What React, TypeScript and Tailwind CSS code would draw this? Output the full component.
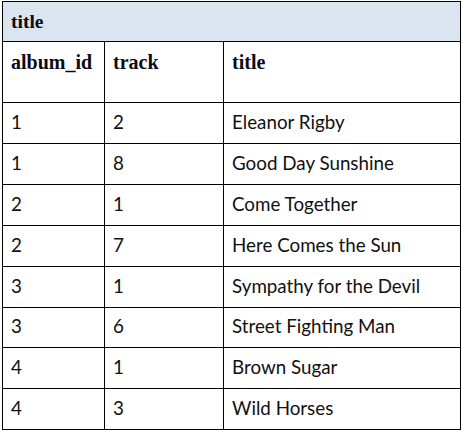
import React from "react";

const rows: [string, string, string][] = [
  ["1", "2", "Eleanor Rigby"],
  ["1", "8", "Good Day Sunshine"],
  ["2", "1", "Come Together"],
  ["2", "7", "Here Comes the Sun"],
  ["3", "1", "Sympathy for the Devil"],
  ["3", "6", "Street Fighting Man"],
  ["4", "1", "Brown Sugar"],
  ["4", "3", "Wild Horses"],
];

const heights = ["h-[41px]", "h-[41px]", "h-[41px]", "h-[41px]", "h-[41px]", "h-[40px]", "h-[41px]", "h-[41px]"];

export default function App() {
  return (
    <div className="w-[464px] h-[433px] bg-white pt-px pl-[2px]">
      <div className="w-[459px] border-l border-t border-black">
        <div className="h-[40px] border-r border-b border-black bg-[#dbe5f1] flex items-center pl-[8px] pt-[1px] font-['Liberation_Serif',serif] font-bold text-[19.5px] text-[#0b0b14]">
          title
        </div>
        <div className="grid grid-cols-[102px_119px_237px] h-[61px] font-['Liberation_Serif',serif] font-bold text-[20px] text-[#0b0b14] leading-[23px]">
          <div className="border-r border-b border-black pl-[8px] pt-[9px]">album_id</div>
          <div className="border-r border-b border-black pl-[8px] pt-[9px]">track</div>
          <div className="border-r border-b border-black pl-[8px] pt-[9px]">title</div>
        </div>
        {rows.map((r, i) => (
          <div
            key={i}
            className={`grid grid-cols-[102px_119px_237px] ${heights[i]} font-['Lato',sans-serif] text-[18.8px] text-[#111]`}
          >
            {r.map((c, j) => (
              <div key={j} className="border-r border-b border-black pl-[8px] flex items-center pb-[2px]">
                {c}
              </div>
            ))}
          </div>
        ))}
      </div>
    </div>
  );
}
